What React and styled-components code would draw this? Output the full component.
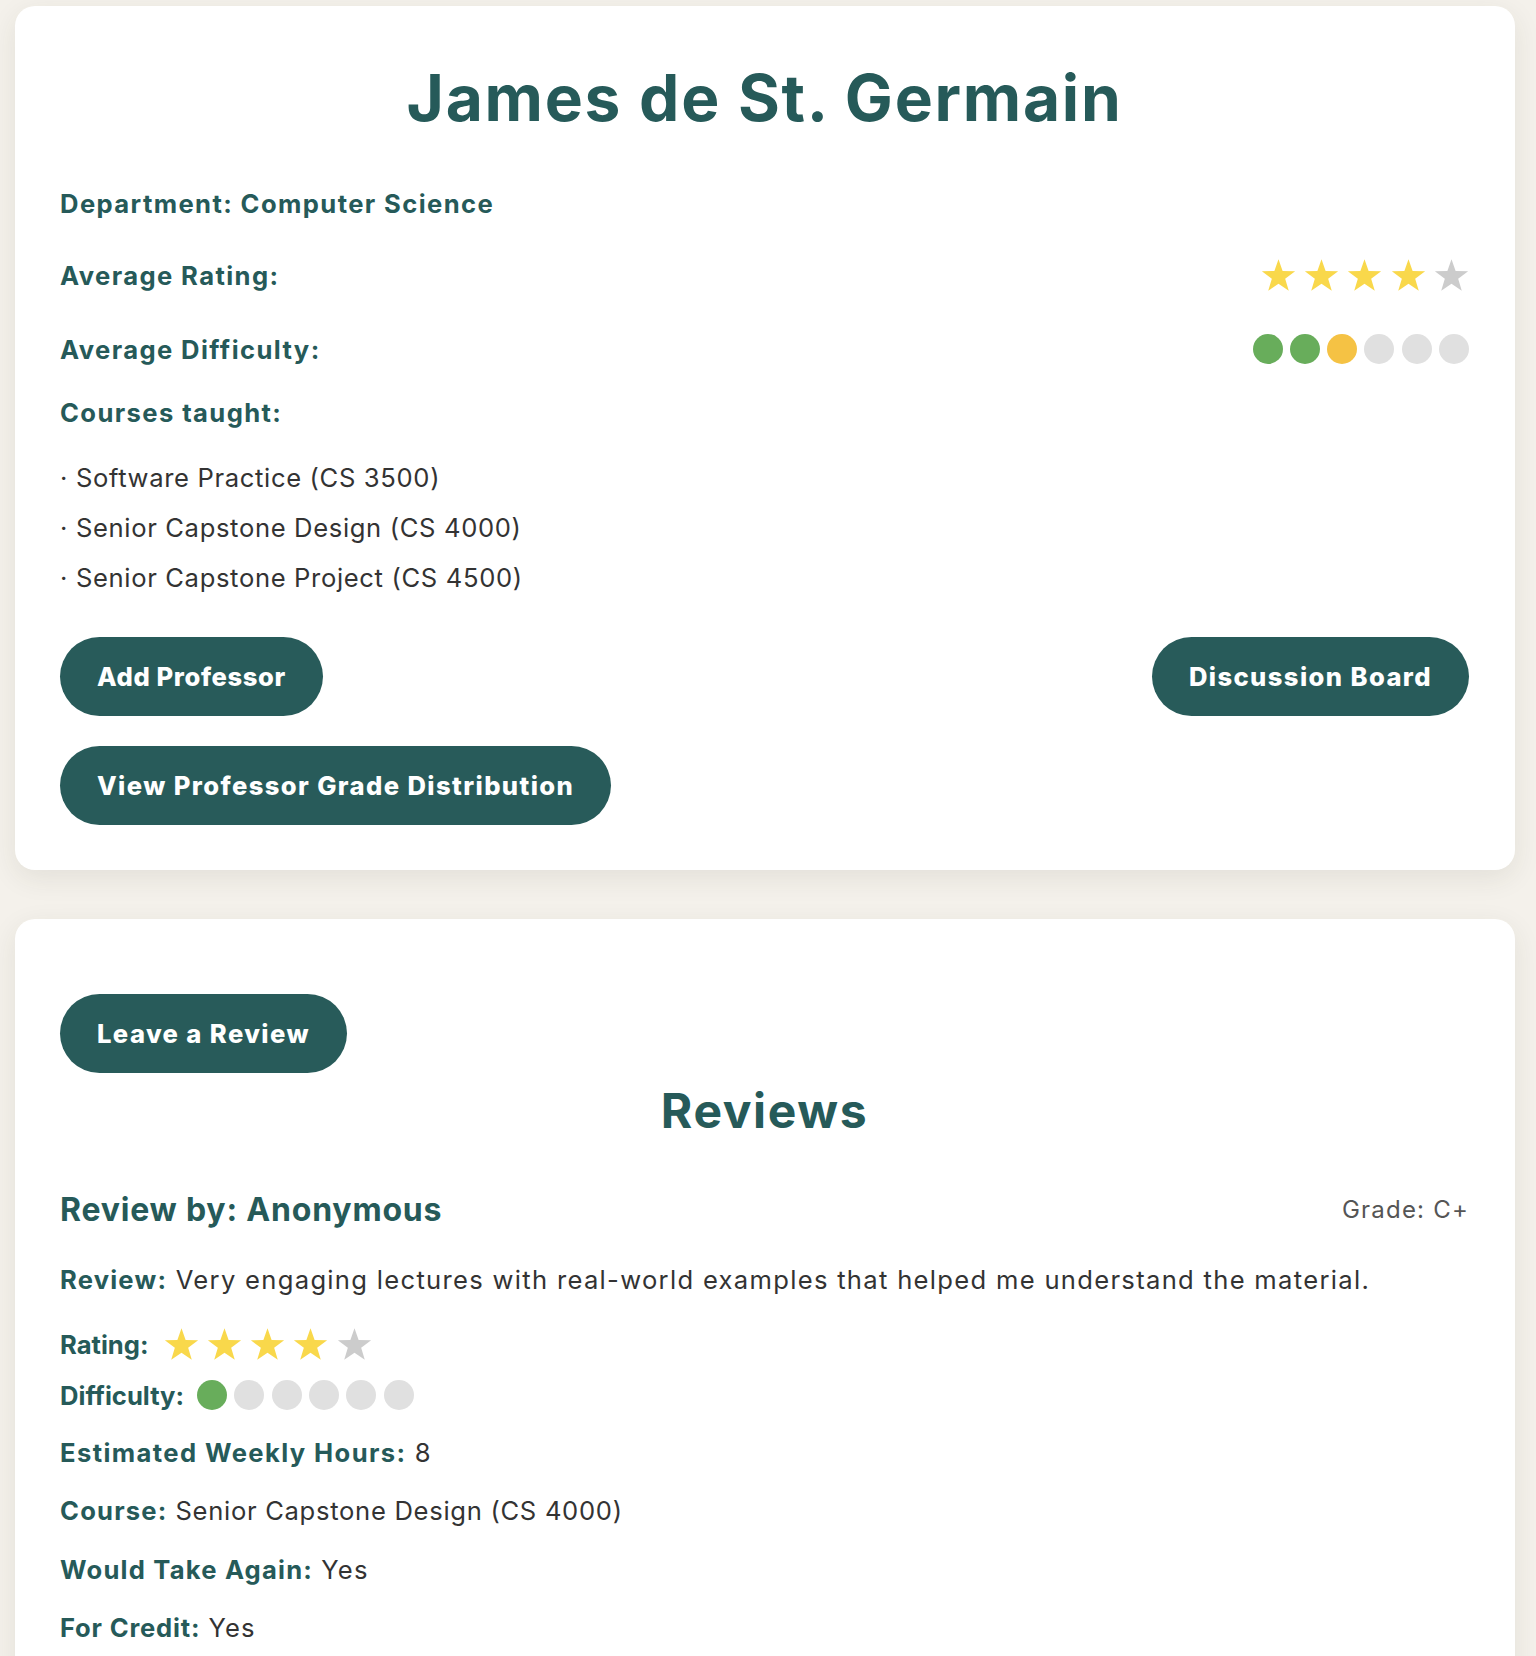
import React from "react";
import styled, { createGlobalStyle } from "styled-components";

const Global = createGlobalStyle`
  html, body { margin: 0; padding: 0; }
  body {
    background: #f4f1eb;
    font-family: "Inter", "Open Sans", sans-serif;
    color: #333333;
  }
`;

const TEAL = "#265a59";

const Page = styled.div`
  padding: 6px 21px 0 15px;
  display: flex;
  flex-direction: column;
  gap: 49px;
`;

const Card = styled.section`
  background: #ffffff;
  border-radius: 20px;
  box-shadow: 0 8px 28px rgba(60, 50, 30, 0.09);
  padding: ${(p) => p.$top}px 46px ${(p) => p.$bottom}px 45px;
  display: flex;
  flex-direction: column;
`;

const Title = styled.h1`
  margin: 0;
  text-align: center;
  font-size: 64px;
  line-height: 80px;
  font-weight: 700;
  color: ${TEAL};
  letter-spacing: 1.75px;
`;

const InfoLine = styled.div`
  margin-top: ${(p) => p.$mt}px;
  font-size: 25.6px;
  line-height: 36px;
  font-weight: 700;
  color: ${TEAL};
  letter-spacing: 1.4px;
`;

const InfoRow = styled.div`
  margin-top: ${(p) => p.$mt}px;
  height: 40px;
  display: flex;
  align-items: center;
  justify-content: space-between;
  font-size: 25.6px;
  font-weight: 700;
  color: ${TEAL};
  letter-spacing: 1.4px;
`;

const CourseList = styled.ul`
  list-style: none;
  margin: 22px 0 0 0;
  padding: 0;
`;

const CourseItem = styled.li`
  font-size: 25.6px;
  line-height: 50px;
  font-weight: 400;
  color: #333333;
  letter-spacing: 0.65px;
`;

const ButtonRow = styled.div`
  margin-top: ${(p) => p.$mt}px;
  display: flex;
  justify-content: space-between;
  align-items: center;
`;

const PillButton = styled.button`
  border: none;
  cursor: pointer;
  background: #285b5a;
  color: #ffffff;
  font-family: "Inter", "Open Sans", sans-serif;
  font-size: 25.6px;
  font-weight: 800;
  letter-spacing: ${(p) => p.$ls ?? 1.4}px;
  height: 79px;
  padding: 0 37px;
  border-radius: 40px;
  line-height: 1;
`;

const Stars = styled.div`
  display: flex;
  gap: 8.3px;
`;

const StarSvg = styled.svg`
  width: 35px;
  height: 35px;
  display: block;
`;

const Dots = styled.div`
  display: flex;
  gap: 7.3px;
`;

const Dot = styled.span`
  width: 30px;
  height: 30px;
  border-radius: 50%;
  background: ${(p) => p.$color};
  display: block;
`;

const ReviewsHeading = styled.h2`
  margin: 8px 0 0 0;
  text-align: center;
  font-size: 48px;
  line-height: 60px;
  font-weight: 700;
  color: ${TEAL};
  letter-spacing: 1.6px;
`;

const ReviewHeader = styled.div`
  margin-top: 48px;
  height: 40px;
  display: flex;
  align-items: center;
  justify-content: space-between;
`;

const ReviewBy = styled.h3`
  margin: 0;
  font-size: 32px;
  font-weight: 700;
  color: ${TEAL};
  letter-spacing: 0.8px;
`;

const Grade = styled.span`
  font-size: 24px;
  font-weight: 400;
  color: #555555;
  letter-spacing: 1.2px;
`;

const Field = styled.p`
  margin: ${(p) => p.$mt}px 0 0 0;
  font-size: 25.6px;
  line-height: 36px;
  color: #333333;
  letter-spacing: ${(p) => p.$ls ?? 1.1}px;
`;

const Label = styled.strong`
  font-weight: 700;
  color: ${TEAL};
  letter-spacing: ${(p) => p.$ls ?? 1.2}px;
`;

const InlineRow = styled.div`
  margin-top: ${(p) => p.$mt}px;
  height: 40px;
  display: flex;
  align-items: center;
  gap: ${(p) => p.$gap}px;
  font-size: 25.6px;
  font-weight: 700;
  color: ${TEAL};
`;

const STAR_POINTS =
  "12,0.8 14.82,8.92 23.41,9.09 16.57,14.28 19.05,22.51 12,17.6 4.95,22.51 7.43,14.28 0.59,9.09 9.18,8.92";

function StarRating({ value }) {
  return (
    <Stars>
      {[0, 1, 2, 3, 4].map((i) => (
        <StarSvg key={i} viewBox="0 0 24 24">
          <polygon points={STAR_POINTS} fill={i < value ? "#f9d84b" : "#cccccc"} />
        </StarSvg>
      ))}
    </Stars>
  );
}

function DifficultyDots({ value }) {
  const colorFor = (i) => {
    if (i >= value) return "#e0e0e0";
    if (i < 2) return "#68ad5b";
    return "#f5c244";
  };
  return (
    <Dots>
      {[0, 1, 2, 3, 4, 5].map((i) => (
        <Dot key={i} $color={colorFor(i)} />
      ))}
    </Dots>
  );
}

const courses = [
  "Software Practice (CS 3500)",
  "Senior Capstone Design (CS 4000)",
  "Senior Capstone Project (CS 4500)",
];

export default function App() {
  return (
    <>
      <Global />
      <Page>
        <Card $top={52} $bottom={45}>
          <Title>James de St. Germain</Title>
          <InfoLine $mt={48}>Department: Computer Science</InfoLine>
          <InfoRow $mt={33}>
            <span>Average Rating:</span>
            <StarRating value={4} />
          </InfoRow>
          <InfoRow $mt={34}>
            <span>Average Difficulty:</span>
            <DifficultyDots value={3} />
          </InfoRow>
          <InfoLine $mt={26}>Courses taught:</InfoLine>
          <CourseList>
            {courses.map((c) => (
              <CourseItem key={c}>· {c}</CourseItem>
            ))}
          </CourseList>
          <ButtonRow $mt={34}>
            <PillButton $ls={0.6}>Add Professor</PillButton>
            <PillButton>Discussion Board</PillButton>
          </ButtonRow>
          <ButtonRow $mt={30}>
            <PillButton>View Professor Grade Distribution</PillButton>
          </ButtonRow>
        </Card>

        <Card $top={75} $bottom={45}>
          <ButtonRow $mt={0}>
            <PillButton>Leave a Review</PillButton>
          </ButtonRow>
          <ReviewsHeading>Reviews</ReviewsHeading>
          <ReviewHeader>
            <ReviewBy>Review by: Anonymous</ReviewBy>
            <Grade>Grade: C+</Grade>
          </ReviewHeader>
          <Field $mt={33} $ls={1.3}>
            <Label>Review:</Label> Very engaging lectures with real-world examples that helped me understand the material.
          </Field>
          <InlineRow $mt={26} $gap={15}>
            <span>Rating:</span>
            <StarRating value={4} />
          </InlineRow>
          <InlineRow $mt={11} $gap={13}>
            <span>Difficulty:</span>
            <DifficultyDots value={1} />
          </InlineRow>
          <Field $mt={20}>
            <Label $ls={1.4}>Estimated Weekly Hours:</Label> 8
          </Field>
          <Field $mt={22} $ls={0.7}>
            <Label>Course:</Label> Senior Capstone Design (CS 4000)
          </Field>
          <Field $mt={23}>
            <Label>Would Take Again:</Label> Yes
          </Field>
          <Field $mt={22}>
            <Label $ls={0.8}>For Credit:</Label> Yes
          </Field>
        </Card>
      </Page>
    </>
  );
}
